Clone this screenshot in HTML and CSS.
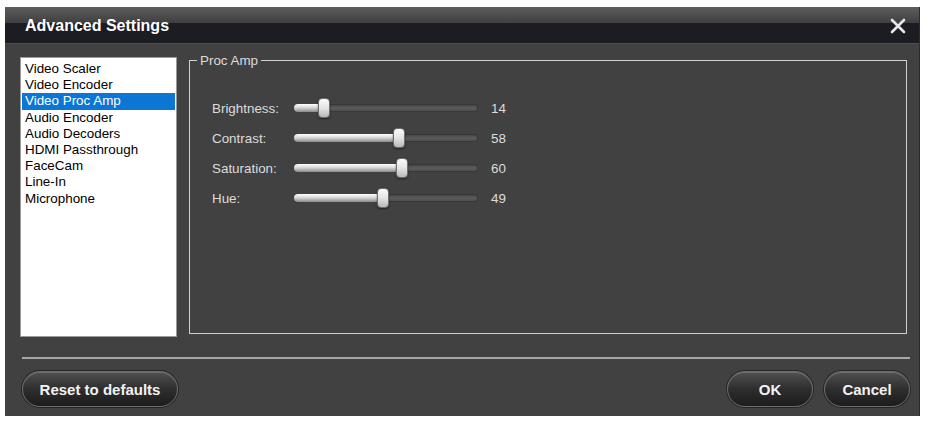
FILE: index.html
```html
<!DOCTYPE html>
<html lang="en">
<head>
    <meta charset="UTF-8">
    <meta name="viewport" content="width=device-width, initial-scale=1.0">
    <title>Advanced Settings</title>
    <link rel="stylesheet" href="styles.css">
</head>
<body>
    <div class="dialog">
        <div class="titlebar">
            <span class="title">Advanced Settings</span>
            <button class="close-btn" aria-label="Close">
                <svg width="16" height="16" viewBox="0 0 16 16">
                    <path d="M2 2 L14 14 M14 2 L2 14" stroke="#e8e8e8" stroke-width="2.6" stroke-linecap="round"/>
                </svg>
            </button>
        </div>

        <div class="content">
            <ul class="category-list">
                <li>Video Scaler</li>
                <li>Video Encoder</li>
                <li class="selected">Video Proc Amp</li>
                <li>Audio Encoder</li>
                <li>Audio Decoders</li>
                <li>HDMI Passthrough</li>
                <li>FaceCam</li>
                <li>Line-In</li>
                <li>Microphone</li>
            </ul>

            <fieldset class="group">
                <legend>Proc Amp</legend>
                <div class="slider-row">
                    <span class="slider-label">Brightness:</span>
                    <div class="track" style="--v: 14"><span class="fill"></span><span class="thumb"></span></div>
                    <span class="slider-value">14</span>
                </div>
                <div class="slider-row">
                    <span class="slider-label">Contrast:</span>
                    <div class="track" style="--v: 58"><span class="fill"></span><span class="thumb"></span></div>
                    <span class="slider-value">58</span>
                </div>
                <div class="slider-row">
                    <span class="slider-label">Saturation:</span>
                    <div class="track" style="--v: 60"><span class="fill"></span><span class="thumb"></span></div>
                    <span class="slider-value">60</span>
                </div>
                <div class="slider-row">
                    <span class="slider-label">Hue:</span>
                    <div class="track" style="--v: 49"><span class="fill"></span><span class="thumb"></span></div>
                    <span class="slider-value">49</span>
                </div>
            </fieldset>
        </div>

        <div class="separator"></div>

        <div class="footer">
            <button class="pill-btn reset-btn">Reset to defaults</button>
            <div class="footer-right">
                <button class="pill-btn ok-btn">OK</button>
                <button class="pill-btn cancel-btn">Cancel</button>
            </div>
        </div>
    </div>
</body>
</html>
```

FILE: styles.css
```css
body {
    margin: 0;
    padding: 7px 0 0 5px;
    background-color: #fff;
    font-family: "Liberation Sans", Arial, sans-serif;
}
.dialog {
    width: 915px;
    height: 409px;
    box-sizing: border-box;
    background-color: #414141;
    border-right: 1px solid #2c2c2c;
    display: flex;
    flex-direction: column;
}
.titlebar {
    height: 37px;
    flex: none;
    display: flex;
    align-items: center;
    justify-content: space-between;
    padding: 0 13px 0 20px;
    background: linear-gradient(to bottom, #5d5d5d 0, #3f3f3f 16px, #1c1d22 16px, #1c1d22 36px, #4d4d4d 36px);
}
.title {
    color: #fff;
    font-weight: bold;
    font-size: 16px;
    line-height: 36px;
    margin-top: 1px;
}
.close-btn {
    background: none;
    border: none;
    padding: 0;
    width: 16px;
    height: 16px;
    margin-top: 0;
    cursor: pointer;
}
.content {
    display: flex;
    align-items: flex-start;
    gap: 12px;
    padding: 9px 0 0 15px;
    height: 293px;
    box-sizing: border-box;
    flex: none;
}
.category-list {
    list-style: none;
    margin: 4px 0 0 0;
    padding: 3px 1px;
    width: 157px;
    height: 280px;
    box-sizing: border-box;
    background-color: #fff;
    border: 1px solid #9a9a9a;
    font-size: 13.4px;
    line-height: 16.2px;
    color: #000;
}
.category-list li {
    padding-left: 3px;
}
.category-list .selected {
    background-color: #0c76d6;
    color: #fff;
}
.group {
    margin: 0;
    width: 718px;
    height: 281px;
    box-sizing: border-box;
    border: 1px solid #cfcfcf;
    padding: 25px 0 0 22px;
    color: #dcdcdc;
    font-size: 13.4px;
}
.group legend {
    margin-left: -15px;
    padding: 0 3px 0 3px;
    line-height: 15px;
}
.slider-row {
    display: flex;
    align-items: center;
    height: 30px;
}
.slider-label {
    width: 82px;
}
.track {
    position: relative;
    width: 184px;
    height: 8px;
    border-radius: 4px;
    background: linear-gradient(to bottom, #3e3e3e, #5c5c5c 50%, #4a4a4a);
    box-shadow: inset 0 0 0 1px #383838;
}
.fill {
    display: block;
    width: calc(var(--v) * 1.7px + 6px);
    height: 8px;
    border-radius: 4px 0 0 4px;
    background: linear-gradient(to bottom, #ffffff, #d8d8d8 45%, #8a8a8a);
}
.thumb {
    position: absolute;
    top: -6px;
    left: calc(var(--v) * 1.7px);
    width: 12px;
    height: 20px;
    box-sizing: border-box;
    border-radius: 4px;
    border: 1px solid #6e6e6e;
    background: linear-gradient(to bottom, #fafafa, #e4e4e4 50%, #b8b8b8);
    box-shadow: 0 1px 2px rgba(0, 0, 0, 0.5);
}
.slider-value {
    margin-left: 13px;
}
.separator {
    flex: none;
    height: 2px;
    margin: 20px 9px 0 17px;
    background-color: #a6a6a6;
}
.footer {
    display: flex;
    justify-content: space-between;
    padding: 12px 9px 0 17px;
}
.footer-right {
    display: flex;
    gap: 11px;
}
.pill-btn {
    height: 36px;
    border-radius: 18px;
    border: 1px solid #6c6c6c;
    background: linear-gradient(to bottom, #505050, #2e2e2e 50%, #1c1c1c);
    box-shadow: 0 0 0 1px #262626, inset 0 1px 0 rgba(255, 255, 255, 0.18);
    color: #f2f2f2;
    font-family: "Liberation Sans", Arial, sans-serif;
    font-weight: bold;
    font-size: 15px;
    cursor: pointer;
    padding: 0;
}
.reset-btn {
    width: 156px;
}
.ok-btn,
.cancel-btn {
    width: 86px;
}
```
